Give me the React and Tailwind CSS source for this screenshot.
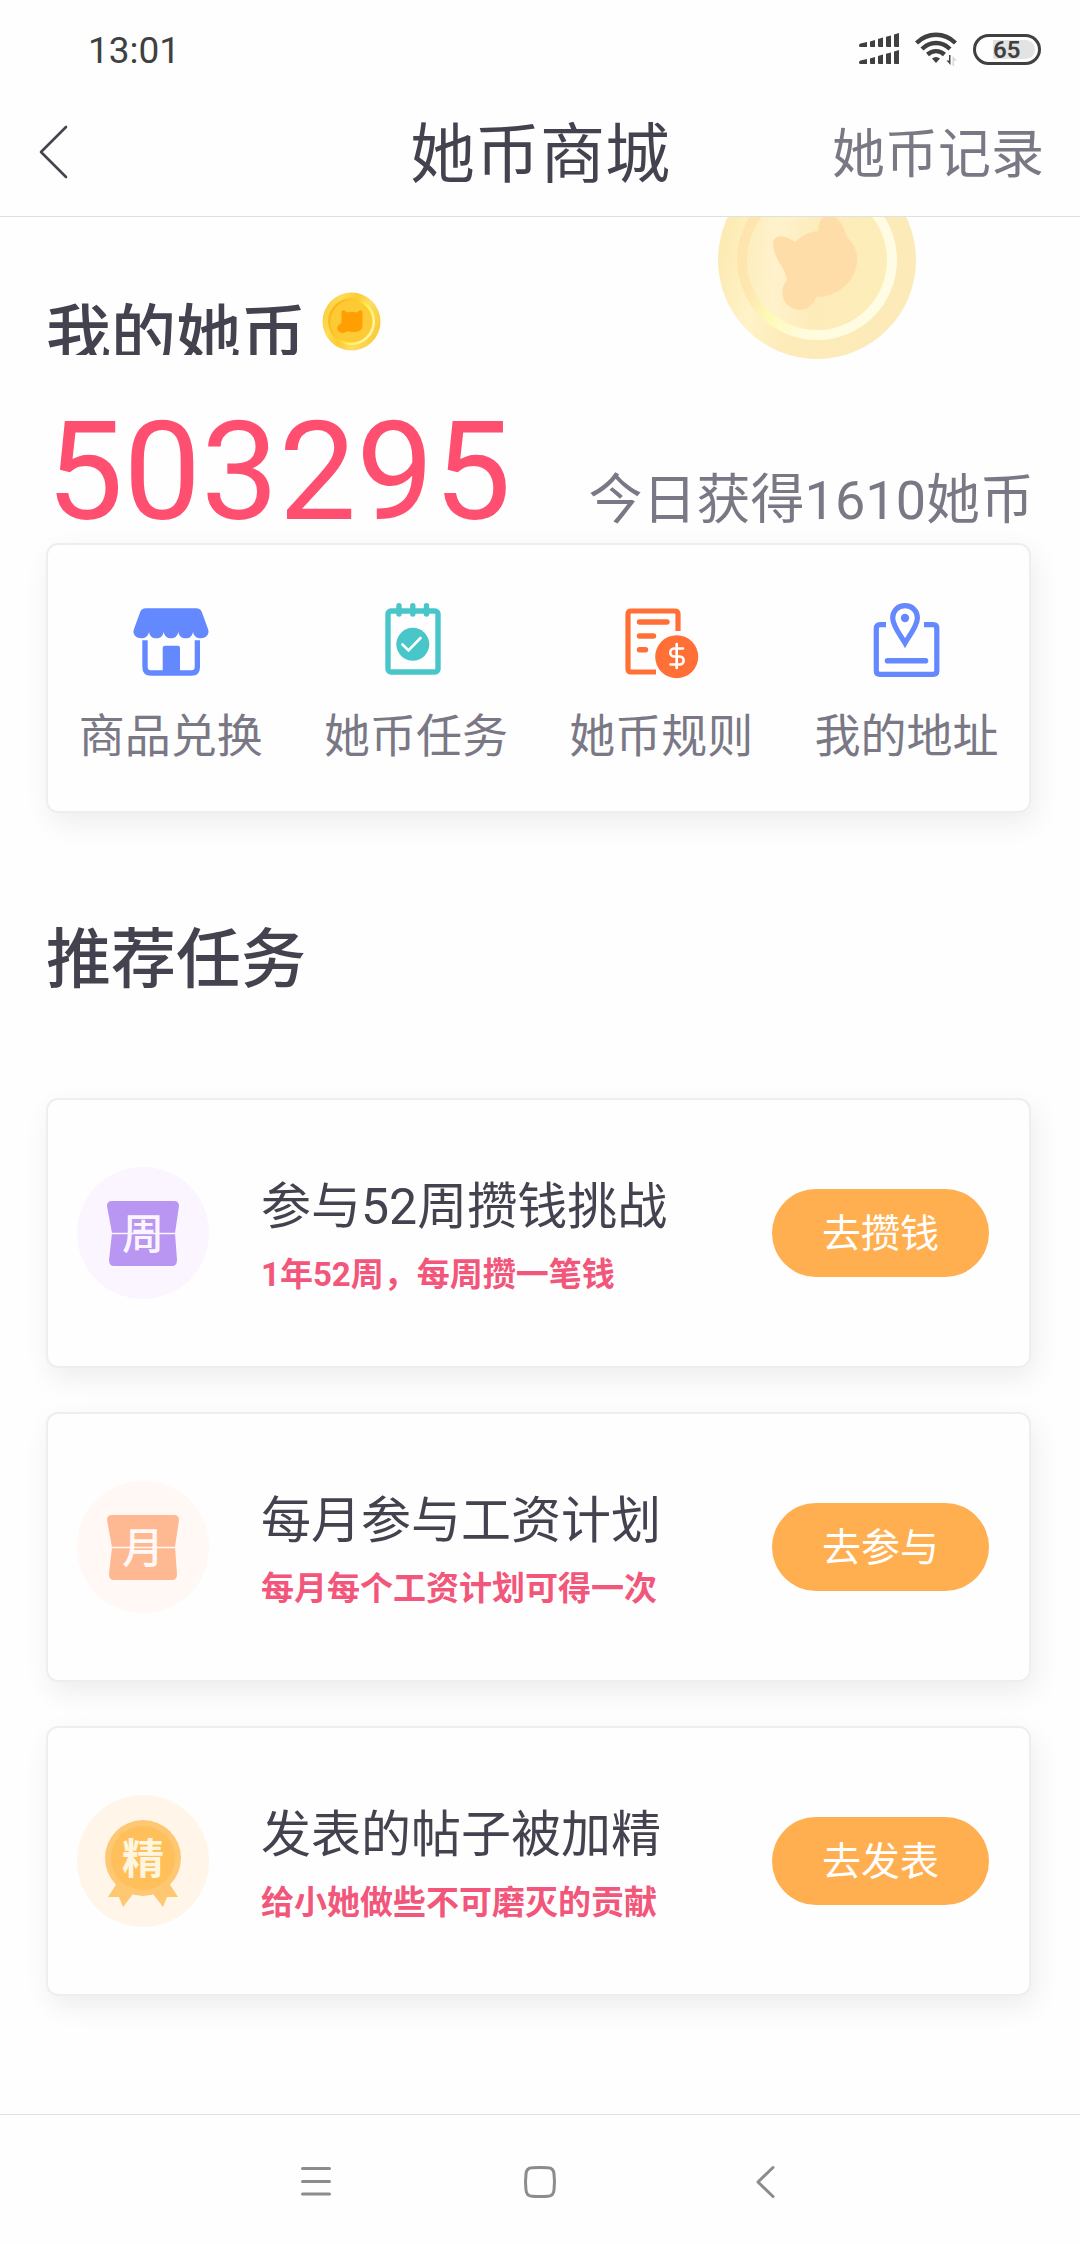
const SHORTCUTS = [
  { label: '商品兑换', icon: <ShopIcon /> },
  { label: '她币任务', icon: <TaskIcon /> },
  { label: '她币规则', icon: <RuleIcon /> },
  { label: '我的地址', icon: <AddressIcon /> },
];

const TASKS = [
  { title: '参与52周攒钱挑战', desc: '1年52周，每周攒一笔钱', action: '去攒钱', icon: <FlipIcon text="周" bg="#fbf5ff" fill="#b996f2" /> },
  { title: '每月参与工资计划', desc: '每月每个工资计划可得一次', action: '去参与', icon: <FlipIcon text="月" bg="#fff8f5" fill="#ffb992" /> },
  { title: '发表的帖子被加精', desc: '给小她做些不可磨灭的贡献', action: '去发表', icon: <MedalIcon /> },
];

function StatusBar() {
  return (
    <div className="flex h-[92px] items-center justify-between pl-[88px] pr-[39px] pt-[6px]">
      <span className="pt-[3px] text-[37px] text-[#404040]">13:01</span>
      <div className="flex items-center gap-[16px]">
        <svg width="40" height="32" viewBox="0 0 40 32" fill="#404040">
          <path d="M0 12.5Q0 11 1.5 10.6L8 9V14H1.5Q0 14 0 12.5Z" />
          <path d="M11 8.4L16 7V14H12Q11 14 11 13Z" />
          <path d="M19 6L24 4.6V14H20Q19 14 19 13Z" />
          <path d="M27 3.8L32 2.4V14H28Q27 14 27 13Z" />
          <path d="M35 1.6L40 0V14H36Q35 14 35 13Z" />
          <path d="M0 29.5Q0 28 1.5 27.6L8 26V31H1.5Q0 31 0 29.5Z" />
          <path d="M11 25.4L16 24V31H12Q11 31 11 30Z" />
          <path d="M19 23L24 21.6V31H20Q19 31 19 30Z" />
          <path d="M27 20.8L32 19.4V31H28Q27 31 27 30Z" />
          <path d="M35 18.6L40 17V31H36Q35 31 35 30Z" />
        </svg>
        <svg width="42" height="34" viewBox="0 0 42 34" fill="none">
          <path d="M1.5 11C12.5 0 29.5 0 40.5 11" stroke="#404040" strokeWidth="4.4" />
          <path d="M7 17C15 9 27 9 35 17" stroke="#404040" strokeWidth="4.4" />
          <path d="M12.5 22.5C17.5 18 24.5 18 29.5 22.5" stroke="#404040" strokeWidth="4.4" />
          <path d="M17 26.5C19.5 24.5 22.5 24.5 25 26.5L21 31Z" fill="#404040" />
          <path d="M35.5 23V33L31.5 28.5H34V23Z" fill="#404040" />
          <path d="M37.5 34V24L42 28.5H39V34Z" fill="#d8d8d8" />
        </svg>
        <div className="flex h-[31px] w-[68px] rounded-full border-3 border-[#404040] p-[3px]">
          <span className="ml-[14px] flex-1 rounded-r-full bg-[#e3e3e3] text-[24px] font-semibold leading-[20px] text-[#404040]">65</span>
        </div>
      </div>
    </div>
  );
}

function BigCoin() {
  return (
    <svg className="absolute right-[164px] -top-[56px]" width="198" height="198" viewBox="0 0 198 198" aria-hidden="true">
      <defs>
        <linearGradient id="bigRim" x1="0" y1="0" x2="1" y2="0.2">
          <stop offset="0" stopColor="#fcebae" />
          <stop offset="0.12" stopColor="#fdebb5" />
          <stop offset="0.3" stopColor="#fff3c8" />
          <stop offset="0.5" stopColor="#fdebb9" />
          <stop offset="1" stopColor="#fceab9" />
        </linearGradient>
        <linearGradient id="bigRing" x1="0" y1="0.3" x2="1" y2="0.6">
          <stop offset="0" stopColor="#fee3ab" />
          <stop offset="0.18" stopColor="#fee7b0" />
          <stop offset="0.34" stopColor="#fdfab8" />
          <stop offset="0.55" stopColor="#fffbdc" />
          <stop offset="1" stopColor="#fffce6" />
        </linearGradient>
        <linearGradient id="bigFace" x1="0" y1="0" x2="1" y2="0.1">
          <stop offset="0" stopColor="#fdedbb" />
          <stop offset="0.25" stopColor="#fff2cc" />
          <stop offset="0.55" stopColor="#fdecb9" />
          <stop offset="1" stopColor="#fdedb9" />
        </linearGradient>
      </defs>
      <circle cx="99" cy="99" r="99" fill="url(#bigRim)" />
      <circle cx="99" cy="99" r="80" fill="url(#bigRing)" />
      <circle cx="99" cy="99" r="70" fill="url(#bigFace)" />
      <path
        d="M55 83C55 74 65 72 77 81C83 75 91 71 100 70C101 60 104 54 111 54C120 55 125 63 129 76C136 83 140 91 139 100C138 120 120 136 98 136C95 145 89 149 81 149C66 147 59 132 69 119C68 115 67 112 66 109C60 100 55 91 55 83Z"
        fill="#ffdda9"
      />
    </svg>
  );
}

function SmallCoin() {
  return (
    <svg width="59" height="59" viewBox="0 0 59 59" aria-hidden="true">
      <defs>
        <linearGradient id="smallRim" x1="0" y1="0.2" x2="1" y2="0.6">
          <stop offset="0" stopColor="#fac93c" />
          <stop offset="0.25" stopColor="#fddc55" />
          <stop offset="0.45" stopColor="#fbcb35" />
          <stop offset="0.7" stopColor="#fddc66" />
          <stop offset="1" stopColor="#fbcb35" />
        </linearGradient>
        <linearGradient id="smallRing" x1="0.1" y1="0.3" x2="0.9" y2="0.7">
          <stop offset="0" stopColor="#fbb81c" />
          <stop offset="0.45" stopColor="#fdd02c" />
          <stop offset="0.65" stopColor="#fff04a" />
          <stop offset="1" stopColor="#fff7a0" />
        </linearGradient>
      </defs>
      <circle cx="29.5" cy="29.5" r="29" fill="url(#smallRim)" />
      <circle cx="29.5" cy="29.5" r="23.5" fill="url(#smallRing)" />
      <circle cx="29.5" cy="29.5" r="21" fill="#fdca36" />
      <path
        d="M19.5 20C20 17.5 22.5 18 24.5 20.5C28 19.5 32 19.5 35 20.5C37.5 17.5 40.5 17.5 40.5 20.5V33C40.5 38 37 40 32 40C28 40 26 39 24 40C19 43 13 38 16 34C17 32 19 32 19.5 31Z"
        fill="#ff9f02"
      />
    </svg>
  );
}

function ShopIcon() {
  return (
    <svg width="80" height="80" viewBox="0 0 80 80" fill="#6488fe" aria-hidden="true">
      <path d="M15 8.3H65Q69.5 8.3 71 12.5L77 29C79 34 75 38.3 70 38.3C66 38.3 62.5 36 62 31.7C61.5 36 58.5 38.3 54.7 38.3C51 38.3 47.8 36 47.3 31.7C46.8 36 43.5 38.3 40 38.3C36.5 38.3 33.2 36 32.7 31.7C32.2 36 29 38.3 25.3 38.3C21.5 38.3 18.5 36 18 31.7C17.5 36 14 38.3 10 38.3C5 38.3 1 34 3 29L9 12.5Q10.5 8.3 15 8.3Z" />
      <path d="M11.3 40.3H16.7V67Q16.7 70.3 20 70.3H31.7V48Q31.7 45.7 34 45.7H47Q49 45.7 49 48V70.3H60.5Q63.7 70.3 63.7 67V40.3H69V67Q69 75.7 60.5 75.7H20Q11.3 75.7 11.3 67Z" />
    </svg>
  );
}

function TaskIcon() {
  return (
    <svg width="80" height="80" viewBox="0 0 80 80" fill="none" stroke="#48c6c9" strokeLinecap="round" aria-hidden="true">
      <rect x="12" y="11" width="50" height="61" rx="3" strokeWidth="5.4" />
      <path d="M23 5.7V14M36.8 5.7V14M50.5 5.7V14" strokeWidth="5.4" />
      <circle cx="36.8" cy="44.3" r="16.5" fill="#48c6c9" stroke="none" />
      <path d="M26.5 44.5L32.5 50.5L44.5 38" stroke="#ffffff" strokeWidth="2.6" />
    </svg>
  );
}

function RuleIcon() {
  return (
    <svg width="80" height="80" viewBox="0 0 80 80" fill="none" stroke="#ff6f36" strokeLinecap="round" aria-hidden="true">
      <path d="M57 31V14Q57 11 54 11H10Q7 11 7 14V69Q7 72 10 72H35" strokeWidth="5.2" strokeLinecap="butt" />
      <path d="M18.5 22H46M18.5 36H32.5M18.5 49.7H24.5" strokeWidth="5.4" />
      <circle cx="55.7" cy="56.7" r="24" fill="#fefefe" stroke="none" />
      <circle cx="55.7" cy="56.7" r="21.5" fill="#ff6f36" stroke="none" />
      <path d="M55.7 44V68M62 48.5H53C48 48.5 48 56.5 53 56.5H58.5C64 56.5 64 64.5 58.5 64.5H49.5" stroke="#ffffff" strokeWidth="2.6" />
    </svg>
  );
}

function AddressIcon() {
  return (
    <svg width="80" height="80" viewBox="0 0 80 80" fill="none" stroke="#6488fe" aria-hidden="true">
      <path d="M20 24.7H14Q10.3 24.7 10.3 28.5V71Q10.3 74.3 14 74.3H67Q70.8 74.3 70.8 71V28.5Q70.8 24.7 67 24.7H58" strokeWidth="5.2" />
      <path d="M39 43C35 36 26.7 26 26.7 18C26.7 10.5 32 5.7 39 5.7C46 5.7 51.4 10.5 51.4 18C51.4 26 43 36 39 43Z" strokeWidth="5.2" />
      <circle cx="39" cy="18" r="4.2" fill="#6488fe" stroke="none" />
      <path d="M21.5 60.7H59.5" strokeWidth="5.6" strokeLinecap="round" />
    </svg>
  );
}

// Flip-calendar plate with one character on it
function FlipIcon({ text, bg, fill }) {
  return (
    <svg width="132" height="132" viewBox="0 0 132 132" aria-hidden="true">
      <circle cx="66" cy="66" r="66" fill={bg} />
      <path d="M35 66L30 39Q30 34 35 34H97Q102 34 102 39L98 66L100 93Q100 99 95 99H37Q32 99 32 93Z" fill={fill} />
      <text x="66" y="82" textAnchor="middle" fontSize="42" fontWeight="500" fill={bg}>{text}</text>
      <path d="M34 66.5H99" stroke={bg} strokeWidth="1.3" />
    </svg>
  );
}

function MedalIcon() {
  return (
    <svg width="132" height="132" viewBox="0 0 132 132" aria-hidden="true">
      <circle cx="66" cy="66" r="66" fill="#fff6e9" />
      <path d="M40 88L31 102H42L46 112L56 99L66 96L76 99L86 112L90 102H101L92 88Z" fill="#fec772" />
      <circle cx="66" cy="63" r="38" fill="#fec772" />
      <circle cx="66" cy="63" r="32" fill="#ffc05c" />
      <text x="66" y="79" textAnchor="middle" fontSize="42" fontWeight="700" fill="#fff6e0">精</text>
    </svg>
  );
}

export default function App() {
  return (
    <div className="flex min-h-screen flex-col bg-[#fefefe] font-['Roboto','Noto_Sans_CJK_SC',sans-serif] text-[#44424f]">
      <StatusBar />

      <header className="grid h-[125px] grid-cols-[1fr_auto_1fr] items-center border-b border-[#e0e0e0] px-[36px] pt-[2px]">
        <button type="button" aria-label="返回" className="justify-self-start">
          <svg width="36" height="60" viewBox="0 0 36 60" fill="none">
            <path d="M30 2L5 27L30 52" stroke="#44424f" strokeWidth="2.6" strokeLinecap="round" strokeLinejoin="round" />
          </svg>
        </button>
        <h1 className="text-[65px] leading-[72px]">她币商城</h1>
        <a href="#records" className="justify-self-end text-[53px] leading-[72px] text-[#7a7885]">她币记录</a>
      </header>

      <main className="px-[46px]">
        <section>
          <div className="relative -mx-[46px] overflow-hidden px-[46px] pt-[75px]">
            <BigCoin />
            <div className="flex h-[67px] items-start gap-[16px]">
              <h2 className="h-[63px] overflow-hidden pt-[11px] text-[65px] font-medium leading-[66px]">我的她币</h2>
              <SmallCoin />
            </div>
          </div>
          <div className="mt-[42px] flex items-baseline justify-between whitespace-nowrap">
            <span className="text-[138px] leading-[142px] text-[#ff4f70]">503295</span>
            <span className="text-[54px] leading-[72px] text-[#7a7885]">今日获得1610她币</span>
          </div>
          <nav className="mr-[3px] grid h-[270px] grid-cols-4 rounded-[12px] border-2 border-[#eeeeee] shadow-[4px_10px_28px_rgba(0,0,0,0.07)]">
            {SHORTCUTS.map((item) => (
              <a key={item.label} href="#shortcut" className="flex flex-col items-center pt-[55px]">
                {item.icon}
                <span className="mt-[24px] text-[46px] leading-[64px] text-[#7a7885]">{item.label}</span>
              </a>
            ))}
          </nav>
        </section>

        <section className="mr-[3px] mt-[114px]">
          <h2 className="text-[65px] font-medium leading-[66px]">推荐任务</h2>
          <ul className="mt-[105px] space-y-[44px]">
            {TASKS.map((task) => (
              <li
                key={task.title}
                className="flex h-[270px] items-center rounded-[12px] border-2 border-[#eeeeee] pl-[29px] pr-[40px] shadow-[4px_10px_28px_rgba(0,0,0,0.07)]"
              >
                {task.icon}
                <div className="ml-[52px] flex-1 pt-[4px]">
                  <h3 className="text-[50px] leading-[72px]">{task.title}</h3>
                  <p className="mt-[8px] text-[33px] font-bold leading-[48px] text-[#f2567a]">{task.desc}</p>
                </div>
                <button type="button" className="h-[88px] w-[217px] rounded-full bg-[#ffaf50] pt-[2px] text-[39px] text-white">
                  {task.action}
                </button>
              </li>
            ))}
          </ul>
        </section>
      </main>

      <footer className="mt-[118px] flex flex-1 items-center justify-center border-t border-[#e2e2e2] pt-[4px]">
        <button type="button" aria-label="菜单" className="flex h-[80px] w-[224px] items-center justify-center">
          <svg width="34" height="34" viewBox="0 0 34 34" stroke="#8c8c8c" strokeWidth="3" strokeLinecap="round">
            <path d="M3.5 3.5H30.5M3.5 16.5H30.5M3.5 29H30.5" />
          </svg>
        </button>
        <button type="button" aria-label="主页" className="flex h-[80px] w-[224px] items-center justify-center">
          <svg width="34" height="34" viewBox="0 0 34 34" fill="none" stroke="#8c8c8c" strokeWidth="3">
            <path d="M9 2.8Q17 2 25 2.8Q30.5 3 31 9Q32 17 31 25Q30.5 31 25 31.2Q17 32 9 31.2Q3.5 31 3 25Q2 17 3 9Q3.5 3 9 2.8Z" />
          </svg>
        </button>
        <button type="button" aria-label="后退" className="flex h-[80px] w-[224px] items-center justify-center">
          <svg width="34" height="34" viewBox="0 0 34 34" fill="none" stroke="#8c8c8c" strokeWidth="3" strokeLinecap="round" strokeLinejoin="round">
            <path d="M26 2.5L11 17L26 31.5" />
          </svg>
        </button>
      </footer>
    </div>
  );
}
